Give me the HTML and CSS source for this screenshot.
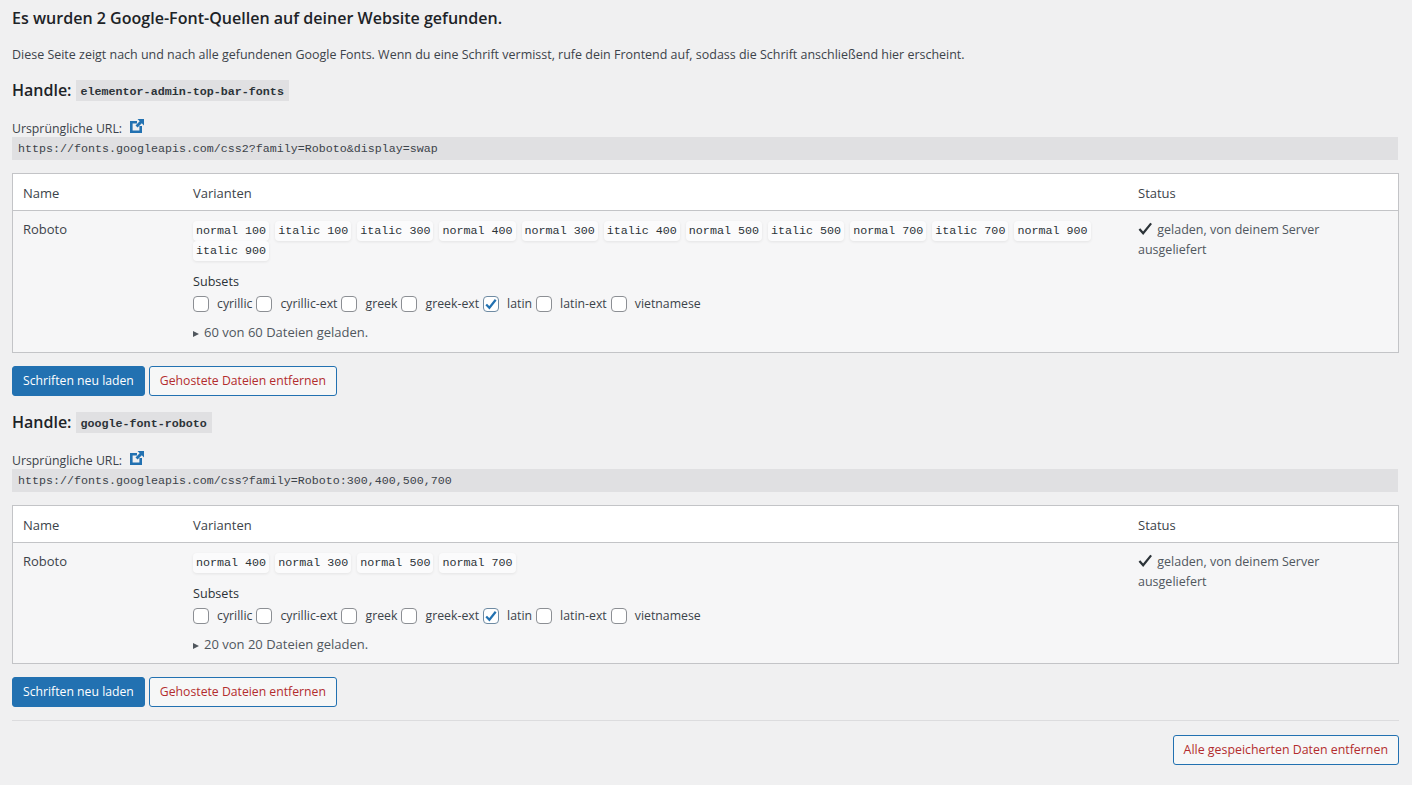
FILE: index.html
```html
<!DOCTYPE html>
<html lang="de">
<head>
<meta charset="utf-8">
<title>Google Fonts</title>
<link rel="stylesheet" href="styles.css">
</head>
<body>
<main class="page">
  <h2 class="title">Es wurden 2 Google-Font-Quellen auf deiner Website gefunden.</h2>
  <p class="intro">Diese Seite zeigt nach und nach alle gefundenen Google Fonts. Wenn du eine Schrift vermisst, rufe dein Frontend auf, sodass die Schrift anschließend hier erscheint.</p>

  <section class="source">
    <h3 class="handle">Handle: <code class="handle-code">elementor-admin-top-bar-fonts</code></h3>
    <div class="url-label">Ursprüngliche URL:
      <svg class="ext" viewBox="0 0 16 16" width="16" height="16"><path d="M1 3h7v2.6H3.6V12.4h6.8V8H13v7H1z" fill="#2271b1"/><path d="M8.5 1H15v6.5l-2.2-2.2L8.6 9.5 6.5 7.4l4.2-4.2z" fill="#2271b1"/></svg>
    </div>
    <code class="url">https://fonts.googleapis.com/css2?family=Roboto&amp;display=swap</code>
    <div class="table">
      <div class="row head"><div class="c1">Name</div><div class="c2">Varianten</div><div class="c3">Status</div></div>
      <div class="row body">
        <div class="c1 name">Roboto</div>
        <div class="c2">
          <div class="variants">
            <code class="var">normal 100</code><code class="var">italic 100</code><code class="var">italic 300</code><code class="var">normal 400</code><code class="var">normal 300</code><code class="var">italic 400</code><code class="var">normal 500</code><code class="var">italic 500</code><code class="var">normal 700</code><code class="var">italic 700</code><code class="var">normal 900</code><code class="var">italic 900</code>
          </div>
          <div class="subsets-label">Subsets</div>
          <div class="subsets">
            <label class="sub"><span class="box"></span>cyrillic</label><label class="sub"><span class="box"></span>cyrillic-ext</label><label class="sub"><span class="box"></span>greek</label><label class="sub"><span class="box"></span>greek-ext</label><label class="sub"><span class="box on"><svg viewBox="0 0 16 16" width="16" height="16"><path d="M3.2 8.4l3.2 3.4 6.3-8" fill="none" stroke="#2271b1" stroke-width="2.2"/></svg></span>latin</label><label class="sub"><span class="box"></span>latin-ext</label><label class="sub"><span class="box"></span>vietnamese</label>
          </div>
          <div class="files"><span class="tri"></span>60 von 60 Dateien geladen.</div>
        </div>
        <div class="c3 status">
          <svg class="check" viewBox="0 0 16 16" width="15" height="15"><path d="M1.5 8.5l4 4.5L14 2.5" fill="none" stroke="#2c3338" stroke-width="2.4"/></svg> geladen, von deinem Server ausgeliefert
        </div>
      </div>
    </div>
    <div class="actions">
      <a class="btn primary">Schriften neu laden</a><a class="btn danger">Gehostete Dateien entfernen</a>
    </div>
  </section>

  <section class="source second">
    <h3 class="handle">Handle: <code class="handle-code">google-font-roboto</code></h3>
    <div class="url-label">Ursprüngliche URL:
      <svg class="ext" viewBox="0 0 16 16" width="16" height="16"><path d="M1 3h7v2.6H3.6V12.4h6.8V8H13v7H1z" fill="#2271b1"/><path d="M8.5 1H15v6.5l-2.2-2.2L8.6 9.5 6.5 7.4l4.2-4.2z" fill="#2271b1"/></svg>
    </div>
    <code class="url">https://fonts.googleapis.com/css?family=Roboto:300,400,500,700</code>
    <div class="table">
      <div class="row head"><div class="c1">Name</div><div class="c2">Varianten</div><div class="c3">Status</div></div>
      <div class="row body">
        <div class="c1 name">Roboto</div>
        <div class="c2">
          <div class="variants">
            <code class="var">normal 400</code><code class="var">normal 300</code><code class="var">normal 500</code><code class="var">normal 700</code>
          </div>
          <div class="subsets-label">Subsets</div>
          <div class="subsets">
            <label class="sub"><span class="box"></span>cyrillic</label><label class="sub"><span class="box"></span>cyrillic-ext</label><label class="sub"><span class="box"></span>greek</label><label class="sub"><span class="box"></span>greek-ext</label><label class="sub"><span class="box on"><svg viewBox="0 0 16 16" width="16" height="16"><path d="M3.2 8.4l3.2 3.4 6.3-8" fill="none" stroke="#2271b1" stroke-width="2.2"/></svg></span>latin</label><label class="sub"><span class="box"></span>latin-ext</label><label class="sub"><span class="box"></span>vietnamese</label>
          </div>
          <div class="files"><span class="tri"></span>20 von 20 Dateien geladen.</div>
        </div>
        <div class="c3 status">
          <svg class="check" viewBox="0 0 16 16" width="15" height="15"><path d="M1.5 8.5l4 4.5L14 2.5" fill="none" stroke="#2c3338" stroke-width="2.4"/></svg> geladen, von deinem Server ausgeliefert
        </div>
      </div>
    </div>
    <div class="actions">
      <a class="btn primary">Schriften neu laden</a><a class="btn danger">Gehostete Dateien entfernen</a>
    </div>
  </section>

  <hr class="rule">
  <div class="footer"><a class="btn danger wide">Alle gespeicherten Daten entfernen</a></div>
</main>
</body>
</html>
```

FILE: styles.css
```css
* { box-sizing: border-box; }
html, body { margin: 0; padding: 0; }
body {
  background: #f0f0f1;
  color: #3c434a;
  font-family: "Open Sans", "Noto Sans", sans-serif;
  font-size: 12.3px;
  line-height: 20px;
  height: 785px;
  overflow: hidden;
}
.page { padding: 0 13px 0 12px; }
.title {
  margin: 0;
  padding-top: 8px;
  height: 45px;
  font-size: 16.06px;
  line-height: 20px;
  font-weight: 600;
  color: #1d2327;
}
.intro { margin: 0; height: 33px; font-size: 12.47px; }
.handle {
  margin: 0;
  height: 25px;
  display: flex;
  align-items: flex-start;
  font-size: 16px;
  line-height: 24px;
  font-weight: 600;
  color: #1d2327;
}
.handle-code {
  height: 21px;
  margin: 2px 0 0 4px;
  padding: 3px 5px 0;
  background: #e0e0e2;
  color: #2c3338;
  font-family: "Liberation Mono", monospace;
  font-size: 11.7px;
  font-weight: 700;
  line-height: 18px;
}
.url-label {
  margin-top: 13px;
  height: 21px;
  padding-top: 4px;
  display: flex;
  align-items: center;
  gap: 7px;
}
.ext { display: block; margin-top: -5px; }
.url {
  display: block;
  height: 23px;
  margin-right: 1px;
  padding: 3px 6px 0;
  background: #e0e0e2;
  color: #3c434a;
  font-family: "Liberation Mono", monospace;
  font-size: 11.67px;
  line-height: 19px;
}
.table {
  margin-top: 13px;
  border: 1px solid #c3c4c7;
  background: #f6f6f7;
}
.row { display: grid; grid-template-columns: 170px 945px 1fr; }
.head {
  background: #fff;
  border-bottom: 1px solid #c3c4c7;
  height: 37px;
  padding-top: 2px;
  align-items: center;
  font-size: 13px;
}
.c1, .c2, .c3 { padding: 0 10px; }
.body { padding: 9px 0 8px; }
.second .body { padding-bottom: 7px; }
.name { font-size: 13px; margin-top: -1px; }
.variants { display: flex; flex-wrap: wrap; gap: 0 6px; margin: 1px 0 11px; }
.var {
  display: block;
  height: 20px;
  padding: 0 3px;
  border-radius: 4px;
  background: #fbfbfc;
  box-shadow: 0 1px 3px rgba(0, 0, 0, .08);
  color: #2c3338;
  font-family: "Liberation Mono", monospace;
  font-size: 11.69px;
  line-height: 20px;
}
.subsets-label { height: 20px; color: #2c3338; font-size: 12.6px; }
.subsets { display: flex; height: 23px; align-items: center; gap: 4px; }
.sub { display: flex; align-items: center; }
.box {
  width: 16px; height: 16px;
  margin-right: 8px;
  border: 1px solid #8c8f94;
  border-radius: 4px;
  background: #fff;
  display: block;
}
.box.on { border-color: #6f8ba3; }
.box svg { display: block; margin: -1px; }
.files { margin-top: 7px; height: 22px; color: #50575e; font-size: 13px; }
.tri {
  display: inline-block;
  margin-right: 5px;
  border-left: 6px solid #50575e;
  border-top: 3px solid transparent;
  border-bottom: 3px solid transparent;
}
.status { color: #50575e; font-size: 12.5px; padding-right: 12px; }
.check { vertical-align: -2px; margin-right: 1px; }
.actions { margin-top: 13px; display: flex; gap: 4px; }
.btn {
  display: block;
  height: 30px;
  padding: 0 10px;
  border: 1px solid #2271b1;
  border-radius: 3px;
  font-size: 12.22px;
  line-height: 28px;
  white-space: nowrap;
}
.primary { background: #2271b1; color: #fff; }
.danger { background: #f6f7f7; color: #b32d2e; }
.wide { font-size: 12.38px; }
.second { margin-top: 14px; }
.rule { margin: 13px 0 0; border: 0; border-top: 1px solid #dcdcde; height: 1px; }
.footer { margin-top: 14px; display: flex; justify-content: flex-end; }
```
